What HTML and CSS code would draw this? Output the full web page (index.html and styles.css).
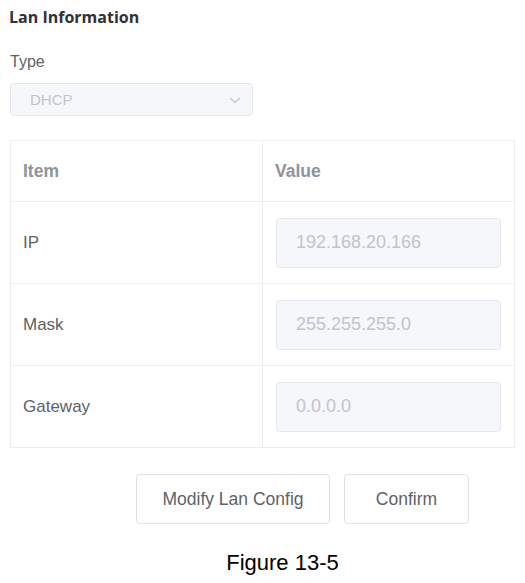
FILE: index.html
```html
<!DOCTYPE html>
<html>
<head>
<meta charset="utf-8">
<link rel="stylesheet" href="styles.css">
</head>
<body>
<div class="page">
  <h2 class="title">Lan Information</h2>
  <div class="label">Type</div>
  <div class="select">
    <span class="select-value">DHCP</span>
    <svg class="chevron" width="12" height="7" viewBox="0 0 12 7"><path d="M1 1 L6 5.5 L11 1" fill="none" stroke="#c0c4cc" stroke-width="1.2"/></svg>
  </div>
  <div class="table">
    <div class="row head">
      <div class="cell c1">Item</div>
      <div class="cell c2">Value</div>
    </div>
    <div class="row">
      <div class="cell c1">IP</div>
      <div class="cell c2"><div class="input">192.168.20.166</div></div>
    </div>
    <div class="row">
      <div class="cell c1">Mask</div>
      <div class="cell c2"><div class="input">255.255.255.0</div></div>
    </div>
    <div class="row last">
      <div class="cell c1">Gateway</div>
      <div class="cell c2"><div class="input">0.0.0.0</div></div>
    </div>
  </div>
  <div class="buttons">
    <button class="btn btn-modify">Modify Lan Config</button>
    <button class="btn btn-confirm">Confirm</button>
  </div>
  <div class="caption">Figure 13-5</div>
</div>
</body>
</html>
```
FILE: styles.css
```css
* { box-sizing: border-box; }
html, body { margin: 0; padding: 0; background: #fff; }
body { font-family: "Liberation Sans", Arial, sans-serif; }
.page { width: 525px; padding-top: 7px; }
.title {
  margin: 0 0 0 9px;
  font-family: "Open Sans", "Liberation Sans", sans-serif;
  font-size: 16px;
  line-height: 20px;
  font-weight: bold;
  color: #303133;
}
.label {
  margin: 25px 0 0 10px;
  font-size: 16px;
  line-height: 20px;
  color: #606266;
}
.select {
  margin: 11px 0 0 10px;
  width: 243px;
  height: 33px;
  background: #f5f7fa;
  border: 1px solid #e4e7ed;
  border-radius: 4px;
  display: flex;
  align-items: center;
  justify-content: space-between;
  padding: 0 11px 0 19px;
}
.select-value { font-size: 15px; color: #c0c4cc; }
.chevron { display: block; margin-top: 1px; }
.table {
  margin: 24px 0 0 10px;
  width: 505px;
  border: 1px solid #ebeef5;
}
.row { display: flex; height: 82px; border-bottom: 1px solid #ebeef5; }
.row.head { height: 61px; }
.row.last { border-bottom: none; height: 81px; }
.cell { display: flex; align-items: center; font-size: 17px; color: #606266; }
.c1 { width: 252px; padding-left: 12px; border-right: 1px solid #ebeef5; }
.c2 { flex: 1; padding-left: 12px; }
.head .cell { font-weight: bold; color: #909399; font-size: 17.5px; }
.input {
  width: 225px;
  height: 50px;
  background: #f5f7fa;
  border: 1px solid #e4e7ed;
  border-radius: 4px;
  display: flex;
  align-items: center;
  padding-left: 19px;
  font-size: 18px;
  color: #c0c4cc;
}
.c2 .input { margin-left: 1px; }
.buttons { display: flex; gap: 14px; margin: 26px 0 0 136px; }
.btn {
  height: 50px;
  background: #fff;
  border: 1px solid #dcdfe6;
  border-radius: 4px;
  font-family: "Liberation Sans", Arial, sans-serif;
  font-size: 17.5px;
  color: #606266;
  padding: 0;
}
.btn-modify { width: 194px; }
.btn-confirm { width: 125px; }
.caption {
  margin-top: 26px;
  padding-left: 40px;
  text-align: center;
  font-size: 22px;
  line-height: 26px;
  color: #000;
}
```
